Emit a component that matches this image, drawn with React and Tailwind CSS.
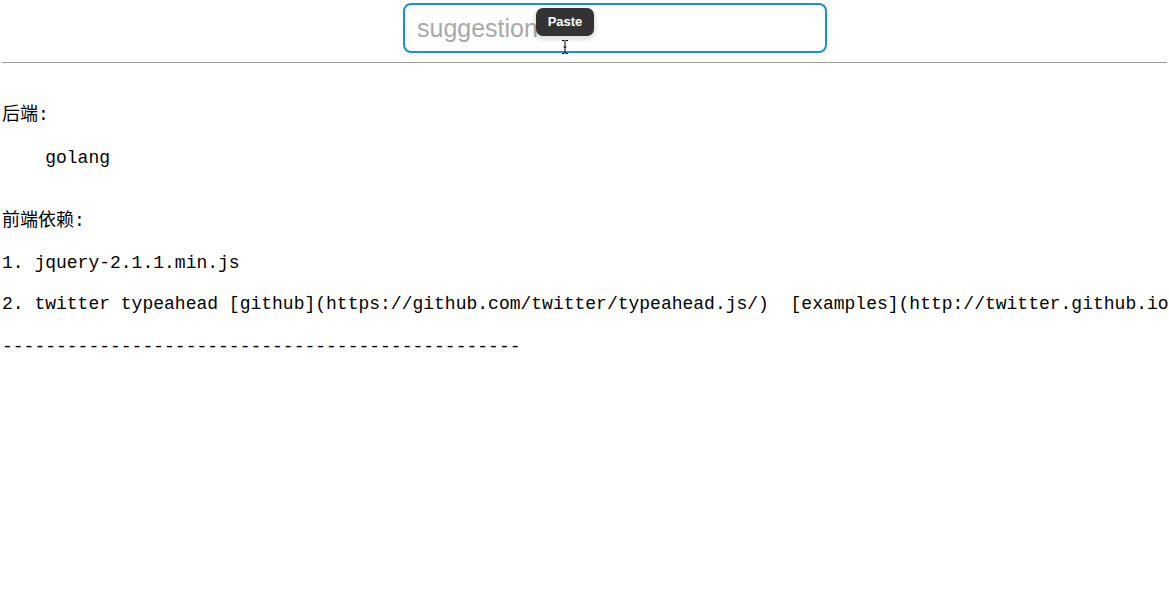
export default function App() {
  const mono = { fontFamily: '"Liberation Mono", "Noto Sans CJK SC", monospace' };
  return (
    <div className="w-[1169px] h-[615px] overflow-hidden bg-white text-black">
      <div className="pt-[3px] pl-[403px] relative">
        <div className="w-[424px] h-[50px] rounded-[8px] border-2 border-[#1b8fd5] flex items-center pl-[12px]">
          <span className="text-[25px] text-[#a9a9a9] mt-[2px]" style={{ fontFamily: '"Liberation Sans", Arial, sans-serif' }}>
            suggestion
          </span>
        </div>
        {/* Paste tooltip over the field */}
        <div className="absolute left-[536px] top-[8px] w-[58px] h-[28px] rounded-[7px] bg-[#333333] shadow-[0_2px_4px_2px_rgba(0,0,0,0.12)] flex items-center justify-center">
          <span className="text-white text-[13px] font-bold" style={{ fontFamily: '"Liberation Sans", Arial, sans-serif' }}>
            Paste
          </span>
        </div>
        {/* text cursor */}
        <svg className="absolute left-[561px] top-[40px]" width="8" height="14" viewBox="0 0 8 14">
          <path d="M1 0.5h2.5M4.5 0.5h2.5M4 1v12M1 13.5h2.5M4.5 13.5h2.5M2.5 7h3" stroke="#000" strokeWidth="1" fill="none" />
        </svg>
      </div>
      <div className="mt-[9px] mx-[2px] border-t border-[#9b9b9b]" />
      <div className="pl-[2px] text-[18px] leading-[22px] whitespace-pre" style={mono}>
        <div className="mt-[41px]">后端:</div>
        <div className="mt-[21px]">{"    golang"}</div>
        <div className="mt-[41px]">前端依赖:</div>
        <div className="mt-[20px]">1. jquery-2.1.1.min.js</div>
        <div className="mt-[19px]">
          {"2. twitter typeahead [github](https://github.com/twitter/typeahead.js/)  [examples](http://twitter.github.io"}
        </div>
        <div className="mt-[21px]">{"------------------------------------------------"}</div>
      </div>
    </div>
  );
}
